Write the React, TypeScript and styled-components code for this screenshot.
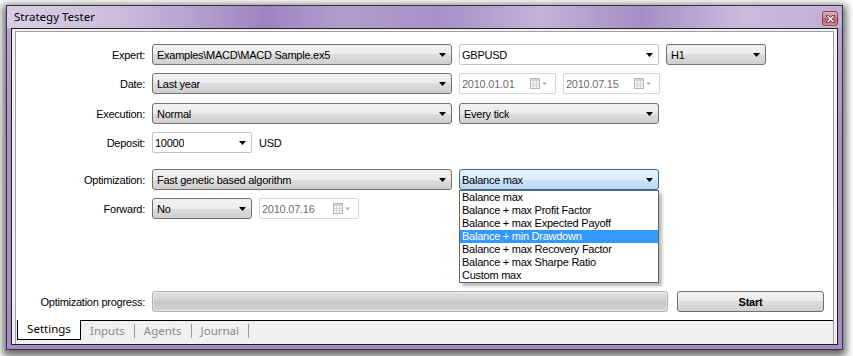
import React from 'react';
import styled, { createGlobalStyle, css } from 'styled-components';

const GlobalStyle = createGlobalStyle`
  html, body {
    margin: 0;
    padding: 0;
    background: #ffffff;
  }
  body {
    width: 853px;
    height: 356px;
    overflow: hidden;
    font-family: "Liberation Sans", Arial, sans-serif;
    font-size: 11px;
    letter-spacing: -0.25px;
    color: #000;
  }
`;

const Stage = styled.div`
  padding: 5px 0 0 6px;
`;

const Window = styled.div`
  box-sizing: border-box;
  width: 837px;
  height: 345px;
  display: flex;
  flex-direction: column;
  padding: 0 4px 4px;
  border: 1px solid #38333e;
  background: linear-gradient(to bottom, #bba8d2 0%, #a990c8 40%, #a68cc6 100%);
  box-shadow: 0 3px 8px 3px rgba(0, 0, 0, 0.62);
`;

const TitleBar = styled.div`
  height: 22px;
  margin: 0 -4px;
  padding: 0 4px 0 7px;
  display: flex;
  align-items: flex-start;
  justify-content: space-between;
  background: linear-gradient(
    to right,
    #d8cee3 0%,
    #cdbfdc 12%,
    #b7a2d0 22%,
    #9e82c0 31%,
    #b39dcd 40%,
    #a88fc7 52%,
    #c3b1d7 64%,
    #a78dc6 76%,
    #cbbadc 88%,
    #c1aed6 100%
  );
`;

const Title = styled.span`
  font-family: "Noto Sans", "Open Sans", sans-serif;
  font-size: 11.5px;
  letter-spacing: 0;
  line-height: 22px;
  color: #000;
`;

const CloseButton = styled.div`
  box-sizing: border-box;
  width: 16px;
  height: 15px;
  margin-top: 5px;
  display: flex;
  align-items: center;
  justify-content: center;
  border: 1px solid rgba(70, 30, 40, 0.55);
  border-radius: 3px;
  background: linear-gradient(to bottom, #e4b0b4 0%, #cf8088 48%, #c06068 52%, #d28a90 100%);
`;

const Client = styled.div`
  flex: 1;
  display: flex;
  flex-direction: column;
  border: 1px solid #1e1e1e;
  background: #f0f0f0;
  padding: 2px 3px 0;
`;

const Panel = styled.div`
  flex: 1;
  display: flex;
  flex-direction: column;
  background: #ffffff;
  border: 1px solid #a0a0a0;
  border-bottom: none;
  padding-top: 12px;
`;

const FormRow = styled.div<{ $mt?: number; $bottom?: boolean }>`
  display: flex;
  align-items: center;
  gap: 7px;
  height: 21px;
  margin-top: ${(p) => (p.$bottom ? 'auto' : `${p.$mt ?? 0}px`)};
  margin-bottom: ${(p) => (p.$bottom ? '8px' : '0')};
`;

const Label = styled.div`
  flex: none;
  width: 129px;
  text-align: right;
  white-space: nowrap;
`;

type ComboVariant = 'gray' | 'white' | 'focus';

const variants = {
  gray: css`
    border: 1px solid #707070;
    border-radius: 3px;
    padding: 0 5px 0 4px;
    background: linear-gradient(to bottom, #f2f2f2 0%, #ebebeb 50%, #dddddd 50%, #cfcfcf 100%);
  `,
  white: css`
    border: 1px solid #c4c4c4;
    border-radius: 2px;
    padding: 0 5px 0 2px;
    background: #ffffff;
  `,
  focus: css`
    border: 1px solid #2f6c9c;
    border-radius: 3px;
    padding: 0 5px 0 2px;
    background: linear-gradient(to bottom, #e8f3fc 0%, #dcecfa 50%, #c9e1f6 50%, #bcd8f1 100%);
  `,
};

const ComboBox = styled.div<{ $w: number; $variant?: ComboVariant }>`
  box-sizing: border-box;
  flex: none;
  width: ${(p) => p.$w}px;
  height: 21px;
  display: flex;
  align-items: center;
  justify-content: space-between;
  ${(p) => variants[p.$variant ?? 'gray']}
`;

const ComboText = styled.span`
  white-space: nowrap;
  overflow: hidden;
`;

const DateField = styled.div<{ $w: number }>`
  box-sizing: border-box;
  flex: none;
  width: ${(p) => p.$w}px;
  height: 21px;
  display: flex;
  align-items: center;
  justify-content: space-between;
  padding: 0 7px 0 2px;
  border: 1px solid #d6d6d6;
  border-radius: 2px;
  background: #ffffff;
  color: #6d6d6d;
`;

const Unit = styled.span`
  white-space: nowrap;
`;

const DropdownWrap = styled.div`
  position: relative;
  flex: none;
`;

const DropdownList = styled.div`
  position: absolute;
  top: 100%;
  left: 0;
  z-index: 2;
  box-sizing: border-box;
  width: 200px;
  border: 1px solid #646464;
  background: #ffffff;
  box-shadow: 3px 3px 3px rgba(0, 0, 0, 0.28);
`;

const DropdownItem = styled.div<{ $active?: boolean }>`
  height: 13px;
  line-height: 13px;
  padding-left: 2px;
  white-space: nowrap;
  background: ${(p) => (p.$active ? '#3399ff' : 'transparent')};
  color: ${(p) => (p.$active ? '#ffffff' : '#000000')};
`;

const ProgressBar = styled.div`
  box-sizing: border-box;
  flex: none;
  width: 516px;
  height: 21px;
  border: 1px solid #b0b0b0;
  border-radius: 3px;
  background: linear-gradient(to bottom, #e2e2e2 0%, #d0d0d0 45%, #c6c6c6 55%, #d6d6d6 100%);
  box-shadow: inset 0 0 0 1px rgba(255, 255, 255, 0.45);
`;

const StartButton = styled.div`
  box-sizing: border-box;
  flex: none;
  width: 147px;
  height: 21px;
  margin-left: 2px;
  display: flex;
  align-items: center;
  justify-content: center;
  border: 1px solid #707070;
  border-radius: 3px;
  background: linear-gradient(to bottom, #f2f2f2 0%, #ebebeb 50%, #dddddd 50%, #cfcfcf 100%);
  font-weight: bold;
`;

const TabStrip = styled.div`
  height: 24px;
  display: flex;
  align-items: flex-start;
  border-left: 1px solid #a0a0a0;
  border-right: 1px solid #a0a0a0;
  padding-left: 1px;
  font-family: "Noto Sans", "Open Sans", sans-serif;
  font-size: 11.5px;
  letter-spacing: 0;
`;

const SelectedTab = styled.div`
  box-sizing: border-box;
  width: 64px;
  height: 20px;
  border: 1px solid #000;
  border-top: none;
  background: #ffffff;
  text-align: center;
  line-height: 18px;
  color: #000;
`;

const TabRest = styled.div`
  flex: 1;
  display: flex;
  height: 23px;
  border-top: 1px solid #000;
`;

const TabItem = styled.div`
  height: 14px;
  margin-top: 3px;
  padding: 0 9px 0 9px;
  border-right: 1px solid #9a9a9a;
  line-height: 14px;
  color: #8a8a8a;
`;

const Arrow: React.FC<{ color?: string }> = ({ color = '#000' }) => (
  <svg width="7" height="4" viewBox="0 0 7 4" style={{ flex: 'none' }}>
    <polygon points="0,0 7,0 3.5,4" fill={color} />
  </svg>
);

const CalendarIcon: React.FC = () => (
  <svg width="18" height="11" viewBox="0 0 18 11" style={{ flex: 'none' }}>
    <rect x="0.5" y="0.5" width="9" height="10" fill="#f6f6f6" stroke="#b8b8b8" />
    <rect x="1" y="1" width="8" height="2" fill="#d4d4d4" />
    <path d="M1 5.5 H9 M1 7.5 H9 M3.5 3 V10 M6.5 3 V10" stroke="#d6d6d6" strokeWidth="1" />
    <polygon points="12,4.5 17,4.5 14.5,7" fill="#a8a8a8" />
  </svg>
);

const CloseGlyph: React.FC = () => (
  <svg width="9" height="8" viewBox="0 0 9 8">
    <path d="M1.5 1 L7.5 7 M7.5 1 L1.5 7" stroke="#6a3038" strokeWidth="3" strokeLinecap="square" />
    <path d="M1.5 1 L7.5 7 M7.5 1 L1.5 7" stroke="#ffffff" strokeWidth="1.5" />
  </svg>
);

const Combo: React.FC<{ w: number; variant?: ComboVariant; text: string }> = ({ w, variant, text }) => (
  <ComboBox $w={w} $variant={variant}>
    <ComboText>{text}</ComboText>
    <Arrow />
  </ComboBox>
);

const DateBox: React.FC<{ w: number; value: string }> = ({ w, value }) => (
  <DateField $w={w}>
    <span>{value}</span>
    <CalendarIcon />
  </DateField>
);

const criteria = [
  'Balance max',
  'Balance + max Profit Factor',
  'Balance + max Expected Payoff',
  'Balance + min Drawdown',
  'Balance + max Recovery Factor',
  'Balance + max Sharpe Ratio',
  'Custom max',
];

const App: React.FC = () => {
  return (
    <>
      <GlobalStyle />
      <Stage>
        <Window>
          <TitleBar>
            <Title>Strategy Tester</Title>
            <CloseButton>
              <CloseGlyph />
            </CloseButton>
          </TitleBar>
          <Client>
            <Panel>
              <FormRow>
                <Label>Expert:</Label>
                <Combo w={300} text="Examples\MACD\MACD Sample.ex5" />
                <Combo w={200} variant="white" text="GBPUSD" />
                <Combo w={100} text="H1" />
              </FormRow>
              <FormRow $mt={8}>
                <Label>Date:</Label>
                <Combo w={300} text="Last year" />
                <DateBox w={97} value="2010.01.01" />
                <DateBox w={97} value="2010.07.15" />
              </FormRow>
              <FormRow $mt={9}>
                <Label>Execution:</Label>
                <Combo w={300} text="Normal" />
                <Combo w={200} text="Every tick" />
              </FormRow>
              <FormRow $mt={8}>
                <Label>Deposit:</Label>
                <Combo w={100} variant="white" text="10000" />
                <Unit>USD</Unit>
              </FormRow>
              <FormRow $mt={16}>
                <Label>Optimization:</Label>
                <Combo w={300} text="Fast genetic based algorithm" />
                <DropdownWrap>
                  <Combo w={200} variant="focus" text="Balance max" />
                  <DropdownList>
                    {criteria.map((c, i) => (
                      <DropdownItem key={c} $active={i === 3}>
                        {c}
                      </DropdownItem>
                    ))}
                  </DropdownList>
                </DropdownWrap>
              </FormRow>
              <FormRow $mt={8}>
                <Label>Forward:</Label>
                <Combo w={100} text="No" />
                <DateBox w={100} value="2010.07.16" />
              </FormRow>
              <FormRow $bottom>
                <Label>Optimization progress:</Label>
                <ProgressBar />
                <StartButton>Start</StartButton>
              </FormRow>
            </Panel>
            <TabStrip>
              <SelectedTab>Settings</SelectedTab>
              <TabRest>
                <TabItem>Inputs</TabItem>
                <TabItem>Agents</TabItem>
                <TabItem>Journal</TabItem>
              </TabRest>
            </TabStrip>
          </Client>
        </Window>
      </Stage>
    </>
  );
};

export default App;
